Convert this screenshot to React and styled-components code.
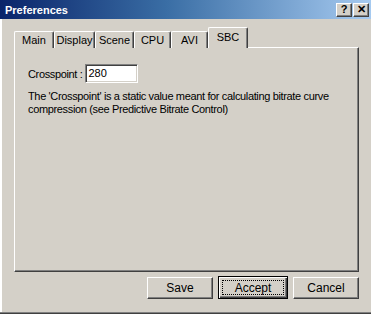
import React from "react";
import styled, { createGlobalStyle } from "styled-components";

const Global = createGlobalStyle`
  html, body { margin: 0; padding: 0; background: #d4d0c8; }
  body { font-family: "Liberation Sans", Arial, sans-serif; font-size: 11px; color: #000; }
`;

const Window = styled.div`
  width: 371px;
  height: 314px;
  box-sizing: border-box;
  background: #d4d0c8;
  display: flex;
  flex-direction: column;
  border-bottom: 1px solid #404040;
  box-shadow: inset 0 -1px 0 #808080, inset 2px 0 0 #ffffff;
  position: relative;
  overflow: hidden;
`;

const TitleBar = styled.div`
  height: 19px;
  background: linear-gradient(to right, #0a246a 0%, #3a6ea5 45%, #a6caf0 100%);
  display: flex;
  align-items: center;
  padding: 0 2px 0 5px;
  color: #fff;
  font-weight: bold;
  font-size: 11px;
  flex: none;
`;

const Title = styled.div`
  flex: 1;
`;

const CapButton = styled.div`
  width: 14px;
  height: 12px;
  background: #d4d0c8;
  color: #000;
  font-size: 11px;
  font-weight: bold;
  display: flex;
  align-items: center;
  justify-content: center;
  border-top: 1px solid #fff;
  border-left: 1px solid #fff;
  border-right: 1px solid #404040;
  border-bottom: 1px solid #404040;
  box-shadow: inset -1px -1px 0 #808080;
  margin-left: ${(p) => (p.$gap ? "1px" : "0")};
  line-height: 1;
`;

const Body = styled.div`
  padding: 9px 12px 0 14px;
  display: flex;
  flex-direction: column;
`;

const Tabs = styled.div`
  display: flex;
  align-items: flex-end;
  height: 20px;
  position: relative;
  z-index: 1;
  margin-bottom: -1px;
`;

const Tab = styled.div`
  box-sizing: border-box;
  width: ${(p) => p.$w}px;
  height: ${(p) => (p.$active ? 21 : 17)}px;
  background: #d4d0c8;
  border-top: 1px solid #fff;
  border-left: 1px solid #fff;
  border-right: 1px solid #404040;
  box-shadow: inset -1px 0 0 #808080;
  border-radius: 2px 2px 0 0;
  display: flex;
  align-items: center;
  justify-content: center;
  padding-bottom: ${(p) => (p.$active ? 3 : 0)}px;
  color: #000;
`;

const Panel = styled.div`
  box-sizing: border-box;
  height: 225px;
  border-top: 1px solid #fff;
  border-left: 1px solid #fff;
  border-right: 1px solid #404040;
  border-bottom: 1px solid #404040;
  box-shadow: inset -1px -1px 0 #808080;
  padding: 16px 14px 0 13px;
  display: flex;
  flex-direction: column;
  letter-spacing: -0.35px;
`;

const FieldRow = styled.div`
  display: flex;
  align-items: center;
  gap: 2px;
`;

const Label = styled.span``;

const Input = styled.div`
  box-sizing: border-box;
  width: 53px;
  height: 19px;
  background: #fff;
  border-top: 1px solid #808080;
  border-left: 1px solid #808080;
  border-right: 1px solid #fff;
  border-bottom: 1px solid #fff;
  box-shadow: inset 1px 1px 0 #404040, inset -1px -1px 0 #d4d0c8;
  padding: 2px 0 0 3px;
  letter-spacing: 0;
`;

const Description = styled.p`
  margin: 7px 0 0 0;
  line-height: 13px;
  width: 310px;
`;

const ButtonRow = styled.div`
  display: flex;
  justify-content: flex-end;
  gap: 5px;
  padding: 4px 12px 0 0;
`;

const Button = styled.div`
  box-sizing: border-box;
  width: ${(p) => (p.$default ? 70 : 66)}px;
  height: ${(p) => (p.$default ? 23 : 22)}px;
  margin-top: ${(p) => (p.$default ? 0 : 1)}px;
  background: #d4d0c8;
  display: flex;
  align-items: center;
  justify-content: center;
  border: 1px solid;
  border-color: ${(p) => (p.$default ? "#000" : "#fff #404040 #404040 #fff")};
  box-shadow: ${(p) =>
    p.$default
      ? "inset 1px 1px 0 #fff, inset -1px -1px 0 #404040, inset -2px -2px 0 #808080"
      : "inset -1px -1px 0 #808080"};
  position: relative;
  font-size: 12px;
`;

const Focus = styled.span`
  position: absolute;
  inset: 3px;
  border: 1px dotted #000;
`;

const tabs = [
  { label: "Main", w: 40 },
  { label: "Display", w: 41 },
  { label: "Scene", w: 39 },
  { label: "CPU", w: 37 },
  { label: "AVI", w: 37 },
  { label: "SBC", w: 40, active: true },
];

export default function App() {
  return (
    <>
      <Global />
      <Window>
        <TitleBar>
          <Title>Preferences</Title>
          <CapButton>?</CapButton>
          <CapButton $gap>✕</CapButton>
        </TitleBar>
        <Body>
          <Tabs>
            {tabs.map((t) => (
              <Tab key={t.label} $w={t.w} $active={t.active}>
                {t.label}
              </Tab>
            ))}
          </Tabs>
          <Panel>
            <FieldRow>
              <Label>Crosspoint :</Label>
              <Input>280</Input>
            </FieldRow>
            <Description>
              The 'Crosspoint' is a static value meant for calculating bitrate curve
              compression (see Predictive Bitrate Control)
            </Description>
          </Panel>
        </Body>
        <ButtonRow>
          <Button>Save</Button>
          <Button $default>
            <Focus />
            Accept
          </Button>
          <Button>Cancel</Button>
        </ButtonRow>
      </Window>
    </>
  );
}
